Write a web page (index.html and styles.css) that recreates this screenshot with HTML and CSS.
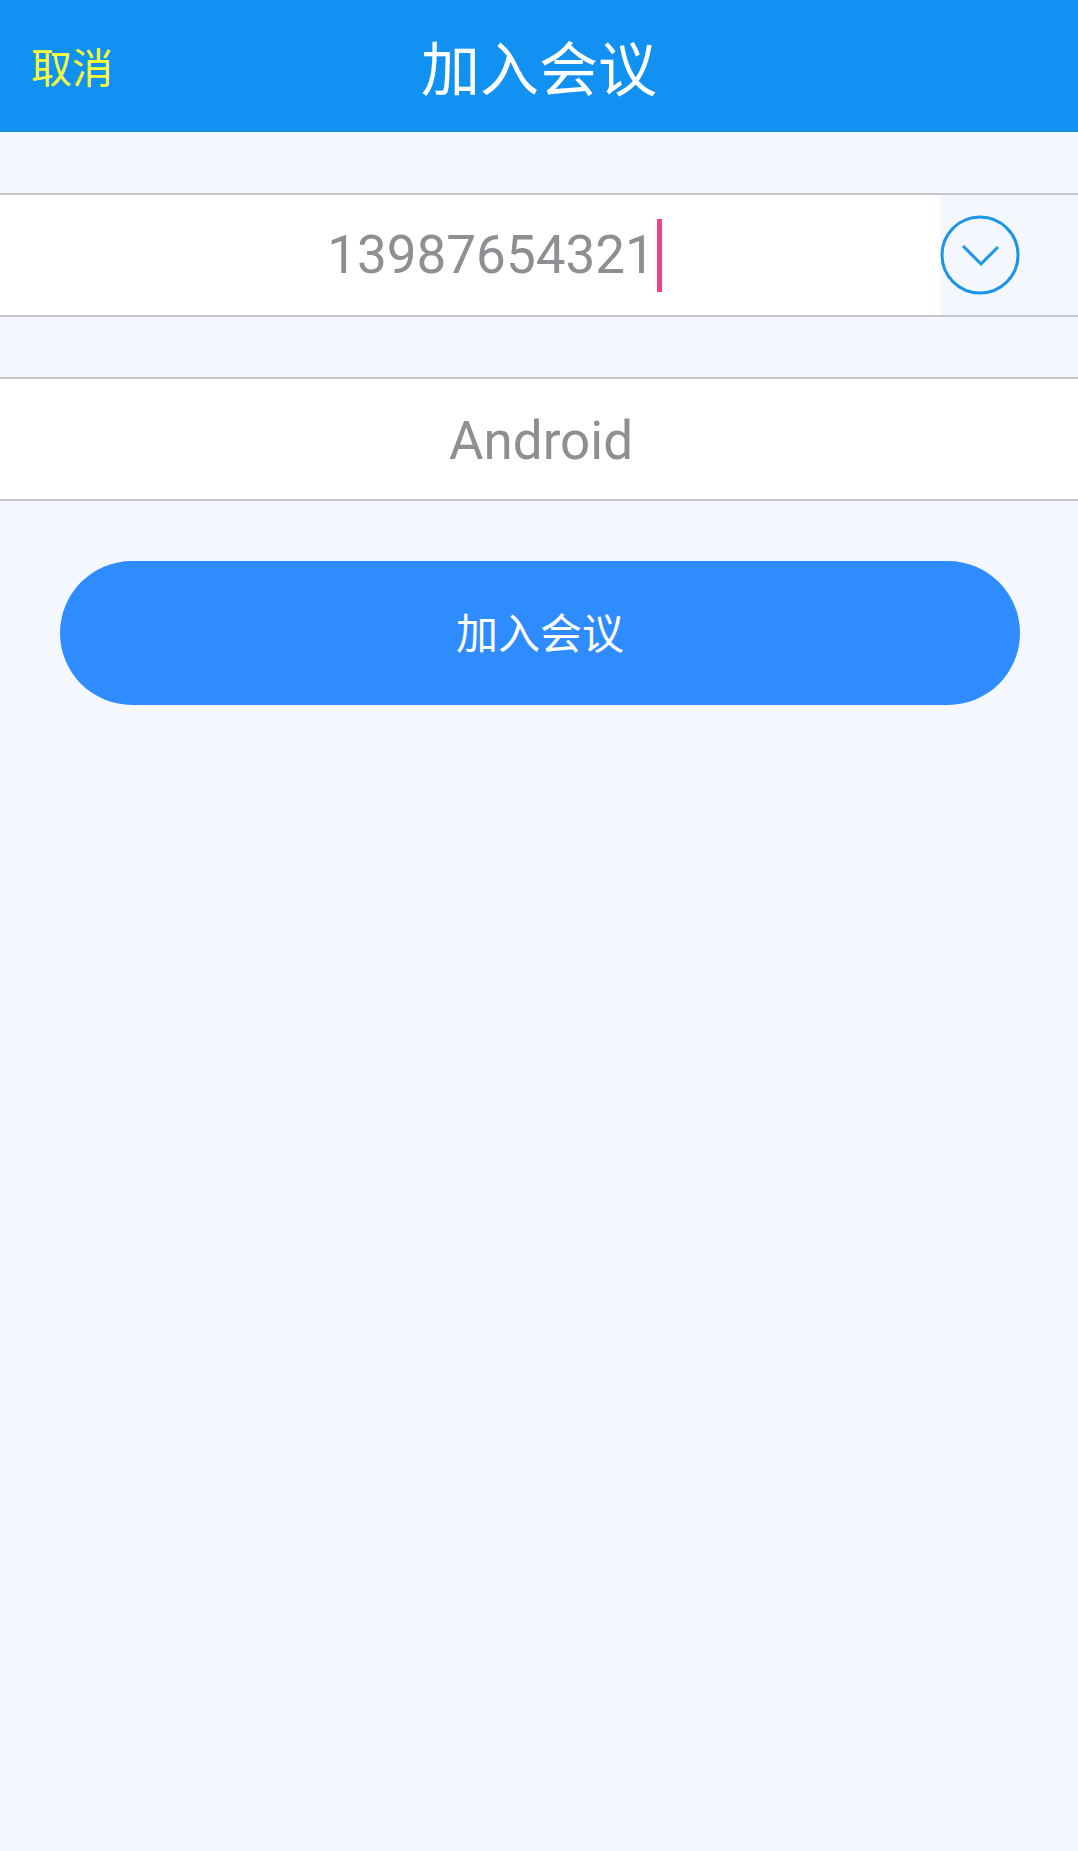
FILE: index.html
```html
<!DOCTYPE html>
<html lang="zh-CN">
<head>
    <meta charset="UTF-8">
    <meta name="viewport" content="width=device-width, initial-scale=1.0">
    <title>加入会议</title>
    <link rel="stylesheet" href="styles.css">
</head>
<body>

    <header class="top-bar">
        <a class="top-bar-cancel" href="#">取消</a>
        <h1 class="top-bar-title">加入会议</h1>
        <span></span>
    </header>

    <div class="field field-room">
        <div class="field-input field-input-room">
            <span class="field-value">13987654321</span>
            <span class="caret"></span>
        </div>
        <button class="history-toggle" type="button">
            <svg width="80" height="80" viewBox="0 0 80 80">
                <circle cx="40" cy="40" r="38" fill="none" stroke="#1b95e6" stroke-width="3"/>
                <polyline points="23,31 41,49 58,32" fill="none" stroke="#1b95e6" stroke-width="3"/>
            </svg>
        </button>
    </div>

    <div class="field field-name">
        <div class="field-input field-input-name">
            <span class="field-value">Android</span>
        </div>
    </div>

    <div class="actions">
        <button class="join-button" type="button">加入会议</button>
    </div>

</body>
</html>
```

FILE: styles.css
```css
body {
    margin: 0;
    min-height: 1851px;
    background-color: #f4f8fe;
    font-family: Roboto, "Noto Sans CJK SC", sans-serif;
}

.top-bar {
    display: grid;
    grid-template-columns: 1fr auto 1fr;
    align-items: center;
    height: 131px;
    padding: 0 31px;
    background-color: #1191f2;
    border-bottom: 1px solid #1986cc;
}

.top-bar-cancel {
    justify-self: start;
    color: #f8ff3a;
    font-family: "Noto Sans CJK SC", sans-serif;
    font-size: 41px;
    line-height: 1;
    text-decoration: none;
}

.top-bar-title {
    margin: 0;
    color: #fff;
    font-family: "Noto Sans CJK SC", sans-serif;
    font-size: 59px;
    font-weight: 400;
    line-height: 1;
}

.field {
    display: flex;
    margin-top: 61px;
    border-top: 2px solid #c7c7cb;
    border-bottom: 2px solid #c7c7cb;
}

.field-name {
    margin-top: 60px;
}

.field-input {
    flex: 1;
    display: flex;
    align-items: center;
    justify-content: center;
    height: 120px;
    background-color: #fff;
}

.field-input-room {
    padding-left: 49px;
}

.field-input-name {
    box-sizing: border-box;
    padding: 4px 0 0 4px;
}

.field-value {
    color: #8e8e93;
    font-size: 53px;
}

.caret {
    width: 5px;
    height: 73px;
    margin-left: 2px;
    background-color: #f2447c;
}

.history-toggle {
    display: flex;
    align-items: center;
    width: 138px;
    padding: 0;
    border: none;
    background: none;
}

.history-toggle svg {
    display: block;
}

.actions {
    padding: 60px 58px 0 60px;
}

.join-button {
    display: block;
    width: 100%;
    height: 144px;
    padding: 0 0 6px;
    border: none;
    border-radius: 72px;
    background-color: #2e8cff;
    color: #fff;
    font-family: "Noto Sans CJK SC", sans-serif;
    font-size: 42px;
}
```
